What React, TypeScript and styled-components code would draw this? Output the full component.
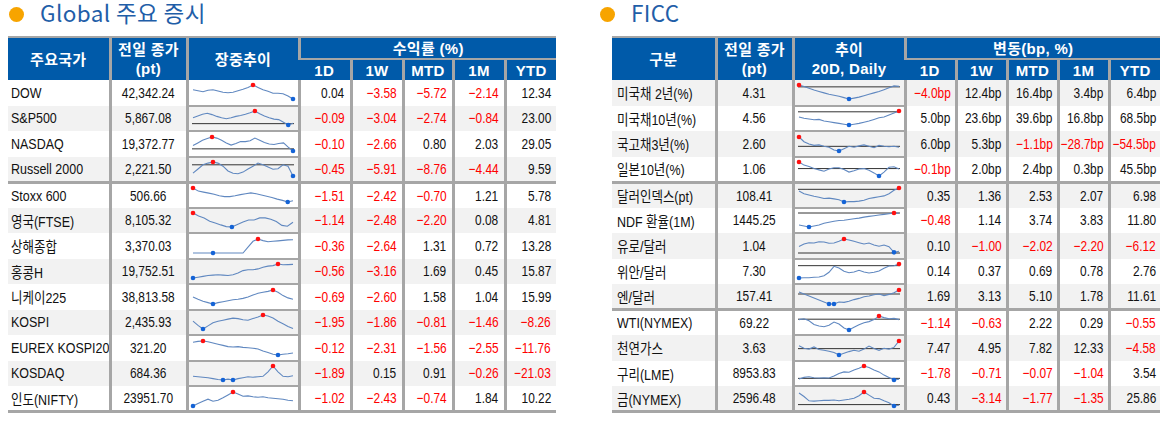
import React from "react";
import styled, { createGlobalStyle } from "styled-components";

const GlobalStyle = createGlobalStyle`
  body {
    margin: 0;
    background: #fff;
    font-family: "Liberation Sans", "Noto Sans CJK KR", sans-serif;
  }
`;

const BLUE = "#005aa9";
const GRID = "#a6a6a6";
const SHADE = "#f2f2f2";

const Page = styled.div`
  width: 1171px;
  height: 421px;
  display: flex;
  padding: 0 0 0 8px;
  box-sizing: border-box;
  gap: 44px;
`;

const Panel = styled.section<{ $indent: number }>`
  width: ${({ $indent }) => 548 + $indent}px;
  display: flex;
  flex-direction: column;
  align-items: flex-start;
`;

const Title = styled.h2<{ $indent: number }>`
  margin: 0 0 0 ${({ $indent }) => ($indent ? 0 : 1)}px;
  height: 36px;
  display: flex;
  align-items: flex-start;
  gap: 16px;
  font-family: "Noto Sans CJK KR", sans-serif;
  font-weight: 400;
  font-size: 22.5px;
  line-height: 24px;
  color: #1f5ea8;
  letter-spacing: 0.4px;
  white-space: nowrap;
  &::before {
    content: "";
    margin-top: 7px;
    width: 15px;
    height: 15px;
    border-radius: 50%;
    background: #f7a400;
  }
`;

const Table = styled.table<{ $indent: number }>`
  margin-left: ${({ $indent }) => $indent}px;
  width: 548px;
  table-layout: fixed;
  border-collapse: collapse;
  border-top: 2px solid ${GRID};
`;

const Head = styled.th<{ $sub?: boolean }>`
  background: ${BLUE};
  color: #fff;
  font-family: "Liberation Sans", "Noto Sans CJK KR", sans-serif;
  font-weight: 700;
  font-size: 15px;
  line-height: 19px;
  height: 20px;
  padding: 0;
  letter-spacing: 0.3px;
  border-top: ${({ $sub }) => ($sub ? `2px solid ${GRID}` : "none")};
  &:not(:first-child) {
    border-left: 3px solid ${GRID};
  }
  tr:nth-child(2) > &:first-child {
    border-left: none;
  }
`;

const Row = styled.tr<{ $shade: boolean; $sep?: boolean }>`
  height: 25.5px;
  background: ${({ $shade }) => ($shade ? SHADE : "#fff")};
  & > td {
    border-top: ${({ $sep }) => ($sep ? `3px solid ${GRID}` : "none")};
  }
  &:last-child > td {
    border-bottom: 3px solid ${GRID};
  }
`;

const Cell = styled.td`
  padding: 0;
  font-family: "Liberation Sans", "Noto Sans CJK KR", sans-serif;
  font-size: 14.5px;
  color: #111;
  white-space: nowrap;
  overflow: hidden;
  &:not(:first-child) {
    border-left: 3px solid ${GRID};
  }
`;

// keeps a condensed text anchored to its side even when it is wider than the cell
const Fit = styled.div<{ $justify: string }>`
  display: flex;
  justify-content: ${({ $justify }) => $justify};
`;

// the reference uses a condensed face
const Narrow = styled.span<{ $origin: string; $scale?: number }>`
  display: inline-block;
  flex-shrink: 0;
  transform: scaleX(${({ $scale }) => $scale ?? 0.82});
  transform-origin: ${({ $origin }) => $origin};
`;

const NameCell = styled(Cell)<{ $pad: number }>`
  padding-left: ${({ $pad }) => $pad}px;
`;

const PriceCell = styled(Cell)``;

const ChartCell = styled(Cell)`
  text-align: center;
  vertical-align: middle;
  border-bottom: 2px solid ${GRID};
  line-height: 0;
`;

const NumCell = styled(Cell)<{ $neg: boolean; $pad: number }>`
  padding-right: ${({ $pad }) => $pad}px;
  color: ${({ $neg }) => ($neg ? "#ff0000" : "#111")};
`;

type Spark = { v: number[]; base?: number; lo?: number[]; hi?: number[] };

function Sparkline({ v, base, lo, hi, width }: Spark & { width: number }) {
  const h = 20;
  const min = Math.min(...v, base ?? Infinity);
  const max = Math.max(...v, base ?? -Infinity);
  const px = (i: number) => 3 + (i * (width - 6)) / (v.length - 1);
  const py = (n: number) => 3 + (1 - (n - min) / (max - min)) * (h - 6);
  const hiIdx = hi ?? [v.indexOf(Math.max(...v))];
  const loIdx = lo ?? [v.indexOf(Math.min(...v))];
  const d = v.map((n, i) => `${i ? "L" : "M"}${px(i).toFixed(1)},${py(n).toFixed(1)}`).join(" ");
  return (
    <svg width={width} height={h} style={{ display: "inline-block" }}>
      {base !== undefined && (
        <line x1={2} x2={width - 2} y1={py(base)} y2={py(base)} stroke="#333" strokeWidth={1} />
      )}
      <path d={d} fill="none" stroke="#6088c0" strokeWidth={1.1} />
      {loIdx.map((i) => (
        <circle key={`l${i}`} cx={px(i)} cy={py(v[i])} r={2.3} fill="#1463d6" />
      ))}
      {hiIdx.map((i) => (
        <circle key={`h${i}`} cx={px(i)} cy={py(v[i])} r={2.3} fill="#ff1010" />
      ))}
    </svg>
  );
}

type Item = { name: string; price: string; chart: Spark; vals: string[]; sep?: boolean };

const globalRows: Item[] = [
  { name: "DOW", price: "42,342.24", vals: ["0.04", "-3.58", "-5.72", "-2.14", "12.34"],
    chart: { v: [5, 4.6, 4.2, 4.8, 5, 4.5, 4, 3.8, 4, 4.6, 5.2, 6, 7, 6, 5, 4.4, 3.6, 3.6, 3.4, 2.4, 1.2] } },
  { name: "S&P500", price: "5,867.08", vals: ["-0.09", "-3.04", "-2.74", "-0.84", "23.00"],
    chart: { v: [4, 4.8, 5.6, 6, 5.4, 4.6, 4, 3.6, 4, 4.6, 5, 5.6, 6.2, 7, 5.8, 4.8, 4, 3.4, 3.2, 2, 0.8, 1.6], base: 1.4 } },
  { name: "NASDAQ", price: "19,372.77", vals: ["-0.10", "-2.66", "0.80", "2.03", "29.05"],
    chart: { v: [3, 4, 5, 5.6, 6.2, 5.8, 5, 4, 3.2, 3.8, 4.5, 4.5, 4.8, 5.8, 5, 4.2, 3.6, 3.4, 3.8, 4, 2.4, 1], base: 1.8 } },
  { name: "Russell 2000", price: "2,221.50", vals: ["-0.45", "-5.91", "-8.76", "-4.44", "9.59"],
    chart: { v: [2, 3.5, 5, 5.6, 6, 5.6, 4.5, 2.8, 2, 1.8, 2.4, 3.5, 4.5, 5.6, 5, 4.2, 3.4, 3.6, 5, 4.5, 1], base: 5 } },
  { name: "Stoxx 600", price: "506.66", vals: ["-1.51", "-2.42", "-0.70", "1.21", "5.78"], sep: true,
    chart: { v: [9, 7.5, 7, 6.5, 6, 5.2, 4.8, 4.8, 5.2, 5.8, 6.2, 6.6, 6.2, 5.6, 5, 4.4, 3.6, 3, 2.2, 2.8] } },
  { name: "영국(FTSE)", price: "8,105.32", vals: ["-1.14", "-2.48", "-2.20", "0.08", "4.81"],
    chart: { v: [9, 7.5, 6.5, 5, 4.2, 3.2, 2.4, 2.2, 3.4, 4.6, 5.6, 5.6, 6.6, 6.6, 6, 4.8, 3, 2.6, 4.5] } },
  { name: "상해종합", price: "3,370.03", vals: ["-0.36", "-2.64", "1.31", "0.72", "13.28"],
    chart: { v: [1, 1, 1, 1, 1, 1, 1, 1, 1, 1, 1, 3.5, 6, 7, 6.3, 5.8, 6, 6.2, 6.4, 6.6, 6.7], lo: [4] } },
  { name: "홍콩H", price: "19,752.51", vals: ["-0.56", "-3.16", "1.69", "0.45", "15.87"],
    chart: { v: [1, 1.4, 1.8, 2.2, 2.4, 2.6, 2.4, 2.2, 2.6, 3.4, 4.6, 5, 5, 5.4, 6.2, 6.8, 7, 7.8, 7.4, 7.5, 7.6] } },
  { name: "니케이225", price: "38,813.58", vals: ["-0.69", "-2.60", "1.58", "1.04", "15.99"],
    chart: { v: [4, 3, 2.2, 1.6, 1, 1.6, 2, 2.4, 2.8, 3, 3.4, 4, 4.8, 5.6, 6, 6.4, 7, 6, 4.6, 3.6, 3] } },
  { name: "KOSPI", price: "2,435.93", vals: ["-1.95", "-1.86", "-0.81", "-1.46", "-8.26"],
    chart: { v: [5, 3.4, 2, 3.2, 4.4, 5, 5.4, 5.8, 6.2, 6, 5.6, 5.4, 6, 6.6, 7.4, 7, 6.2, 5, 4, 3, 2.2] } },
  { name: "EUREX KOSPI200", price: "321.20", vals: ["-0.12", "-2.31", "-1.56", "-2.55", "-11.76"],
    chart: { v: [8, 8.4, 8.6, 8.2, 7.6, 7, 6.4, 5.8, 5.6, 5.8, 5.4, 5.2, 5, 4.6, 3.6, 2.8, 2, 1.6, 2, 2.2, 2.6] } },
  { name: "KOSDAQ", price: "684.36", vals: ["-1.89", "0.15", "0.91", "-0.26", "-21.03"],
    chart: { v: [2.6, 2.4, 2.2, 2, 1.6, 1.2, 1, 1.4, 1, 1.6, 2, 2.4, 2.2, 2.4, 2.6, 4.5, 7, 4.5, 2.6, 2.4, 2.8], lo: [6, 8] } },
  { name: "인도(NIFTY)", price: "23951.70", vals: ["-1.02", "-2.43", "-0.74", "1.84", "10.22"],
    chart: { v: [1, 2, 3, 3.8, 3, 3.4, 4.4, 5.6, 6.8, 6, 5, 5.2, 4.8, 4.6, 4.8, 4.4, 4.2, 4, 3.8, 3.4, 3.2] } },
];

const ficcRows: Item[] = [
  { name: "미국채 2년(%)", price: "4.31", vals: ["-4.0bp", "12.4bp", "16.4bp", "3.4bp", "6.4bp"],
    chart: { v: [9, 8.4, 7.6, 6.8, 6.2, 5.6, 5, 4.6, 4.2, 3.6, 3, 3.4, 3.8, 4.4, 5, 5.6, 6.2, 7, 7.8, 8.6, 8.4], base: 8.2 } },
  { name: "미국채10년(%)", price: "4.56", vals: ["5.0bp", "23.6bp", "39.6bp", "16.8bp", "68.5bp"],
    chart: { v: [6, 5.4, 5, 4.6, 4.8, 4, 3.6, 3.2, 2.8, 2.4, 2, 2.4, 2.8, 3.4, 4, 4.8, 5.6, 6, 7, 8, 9], base: 8.6 } },
  { name: "국고채3년(%)", price: "2.60", vals: ["6.0bp", "5.3bp", "-1.1bp", "-28.7bp", "-54.5bp"],
    chart: { v: [9, 7, 6, 5.4, 5.6, 5, 4.6, 3.4, 3, 4, 5, 4.6, 5.2, 5.6, 5, 4.4, 5.4, 5, 4.8, 5, 4.6], base: 5 } },
  { name: "일본10년(%)", price: "1.06", vals: ["-0.1bp", "2.0bp", "2.4bp", "0.3bp", "45.5bp"],
    chart: { v: [9, 7.6, 7, 6, 5.4, 4.8, 5.8, 6.4, 6.4, 5.6, 4.4, 5, 5.8, 6, 5.2, 4, 2.6, 4.4, 6.6, 6.8, 5.8], base: 6 } },
  { name: "달러인덱스(pt)", price: "108.41", vals: ["0.35", "1.36", "2.53", "2.07", "6.98"], sep: true,
    chart: { v: [7.6, 6.4, 5.8, 5.2, 4.8, 4.2, 4.4, 4, 3.6, 2.6, 2.8, 2.8, 3, 3.4, 4.2, 4.6, 5, 5.4, 6.4, 8, 9], base: 8.4 } },
  { name: "NDF 환율(1M)", price: "1445.25", vals: ["-0.48", "1.14", "3.74", "3.83", "11.80"],
    chart: { v: [2, 1.4, 0.8, 1.4, 2, 3, 3.6, 4.2, 4.6, 4.8, 5.2, 5.6, 6, 6.6, 7, 7.4, 7.8, 8.2, 8.6, 9, 8.8], base: 9 } },
  { name: "유로/달러", price: "1.04", vals: ["0.10", "-1.00", "-2.02", "-2.20", "-6.12"],
    chart: { v: [4.5, 6, 6.8, 6.6, 7.4, 7.2, 6.4, 6.6, 7.6, 9, 8.4, 7.6, 6.8, 6, 6.6, 5.4, 4.6, 5.4, 4.4, 1, 1.6], base: 0.6 } },
  { name: "위안/달러", price: "7.30", vals: ["0.14", "0.37", "0.69", "0.78", "2.76"],
    chart: { v: [1, 1.1, 1.2, 1.4, 1.6, 2.4, 4.4, 8, 7, 5, 4.2, 4.6, 5.6, 4.6, 4, 4.4, 5.2, 6.8, 8.2, 8.4, 9.4], base: 8.4 } },
  { name: "엔/달러", price: "157.41", vals: ["1.69", "3.13", "5.10", "1.78", "11.61"],
    chart: { v: [8, 7, 6, 5, 4, 3, 2, 2, 3, 2.8, 3.4, 4.2, 4.8, 5.6, 6, 6.6, 7, 6.2, 6.8, 7.6, 9], base: 7, lo: [6, 7] } },
  { name: "WTI(NYMEX)", price: "69.22", vals: ["-1.14", "-0.63", "2.22", "0.29", "-0.55"], sep: true,
    chart: { v: [7.2, 7.6, 6.6, 4.8, 4, 3.6, 4.4, 6, 5, 3, 2, 3.4, 4.6, 5.6, 6.2, 7.2, 9, 8.2, 7.6, 7.8, 7.2], base: 7.4 } },
  { name: "천연가스", price: "3.63", vals: ["7.47", "4.95", "7.82", "12.33", "-4.58"],
    chart: { v: [6.8, 5.6, 5.2, 6.2, 5, 4.6, 4.2, 3.6, 2.4, 3.2, 4, 4.6, 4.2, 5.2, 6.6, 5.4, 4.6, 5.6, 5.2, 6, 9], base: 5.4 } },
  { name: "구리(LME)", price: "8953.83", vals: ["-1.78", "-0.71", "-0.07", "-1.04", "3.54"],
    chart: { v: [1, 2, 2.4, 1.8, 1.6, 1.8, 1.6, 2.8, 4.4, 5.4, 5.2, 6.6, 7.6, 9, 8, 6.6, 5.4, 3.4, 2, 0.4, 0.8], base: 1.4 } },
  { name: "금(NYMEX)", price: "2596.48", vals: ["0.43", "-3.14", "-1.77", "-1.35", "25.86"],
    chart: { v: [8, 6, 3.6, 3.4, 3.6, 3.8, 3.8, 4, 3.6, 4, 4.4, 5, 6.4, 8.6, 6.8, 5, 4.8, 3.6, 2.4, 0.6, 1], base: 1.4 } },
];

const fmt = (s: string) => s.replace(/^-/, "\u2212");

type TableProps = {
  title: string;
  indent: number;
  widths: number[];
  heads: React.ReactNode[];
  group: string;
  rows: Item[];
  shadeFirst: boolean;
  namePad: number;
  numPad: number;
};

function DataTable({ title, indent, widths, heads, group, rows, shadeFirst, namePad, numPad }: TableProps) {
  return (
    <Panel $indent={indent}>
      <Title $indent={indent}>{title}</Title>
      <Table $indent={indent}>
        <colgroup>
          {widths.map((w, i) => (
            <col key={i} style={{ width: w }} />
          ))}
        </colgroup>
        <thead>
          <tr>
            {heads.map((h, i) => (
              <Head key={i} rowSpan={2}>
                {h}
              </Head>
            ))}
            <Head colSpan={5}>{group}</Head>
          </tr>
          <tr>
            {["1D", "1W", "MTD", "1M", "YTD"].map((p) => (
              <Head key={p} $sub>
                {p}
              </Head>
            ))}
          </tr>
        </thead>
        <tbody>
          {rows.map((r, i) => (
            <Row key={r.name} $shade={(i % 2 === 0) === shadeFirst} $sep={r.sep}>
              <NameCell $pad={namePad}>
                <Fit $justify="flex-start">
                  <Narrow $origin="left" $scale={0.86}>{r.name}</Narrow>
                </Fit>
              </NameCell>
              <PriceCell>
                <Fit $justify="center">
                  <Narrow $origin="center">{r.price}</Narrow>
                </Fit>
              </PriceCell>
              <ChartCell>
                <Sparkline {...r.chart} width={widths[2] - 6} />
              </ChartCell>
              {r.vals.map((v, j) => (
                <NumCell key={j} $neg={v.startsWith("-")} $pad={numPad}>
                  <Fit $justify="flex-end">
                    <Narrow $origin="right">{fmt(v)}</Narrow>
                  </Fit>
                </NumCell>
              ))}
            </Row>
          ))}
        </tbody>
      </Table>
    </Panel>
  );
}

export default function App() {
  return (
    <>
      <GlobalStyle />
      <Page>
        <DataTable
          title="Global 주요 증시"
          indent={0}
          widths={[102, 77, 112, 52, 52, 50, 52, 51]}
          heads={[
            "주요국가",
            <>
              전일 종가
              <br />
              (pt)
            </>,
            "장중추이",
          ]}
          group="수익률 (%)"
          rows={globalRows}
          shadeFirst={false}
          namePad={3}
          numPad={5}
        />
        <DataTable
          title="FICC"
          indent={12}
          widths={[104, 77, 112, 51, 51, 51, 51, 51]}
          heads={[
            "구분",
            <>
              전일 종가
              <br />
              (pt)
            </>,
            <>
              추이
              <br />
              20D, Daily
            </>,
          ]}
          group="변동(bp, %)"
          rows={ficcRows}
          shadeFirst={true}
          namePad={5}
          numPad={4}
        />
      </Page>
    </>
  );
}
